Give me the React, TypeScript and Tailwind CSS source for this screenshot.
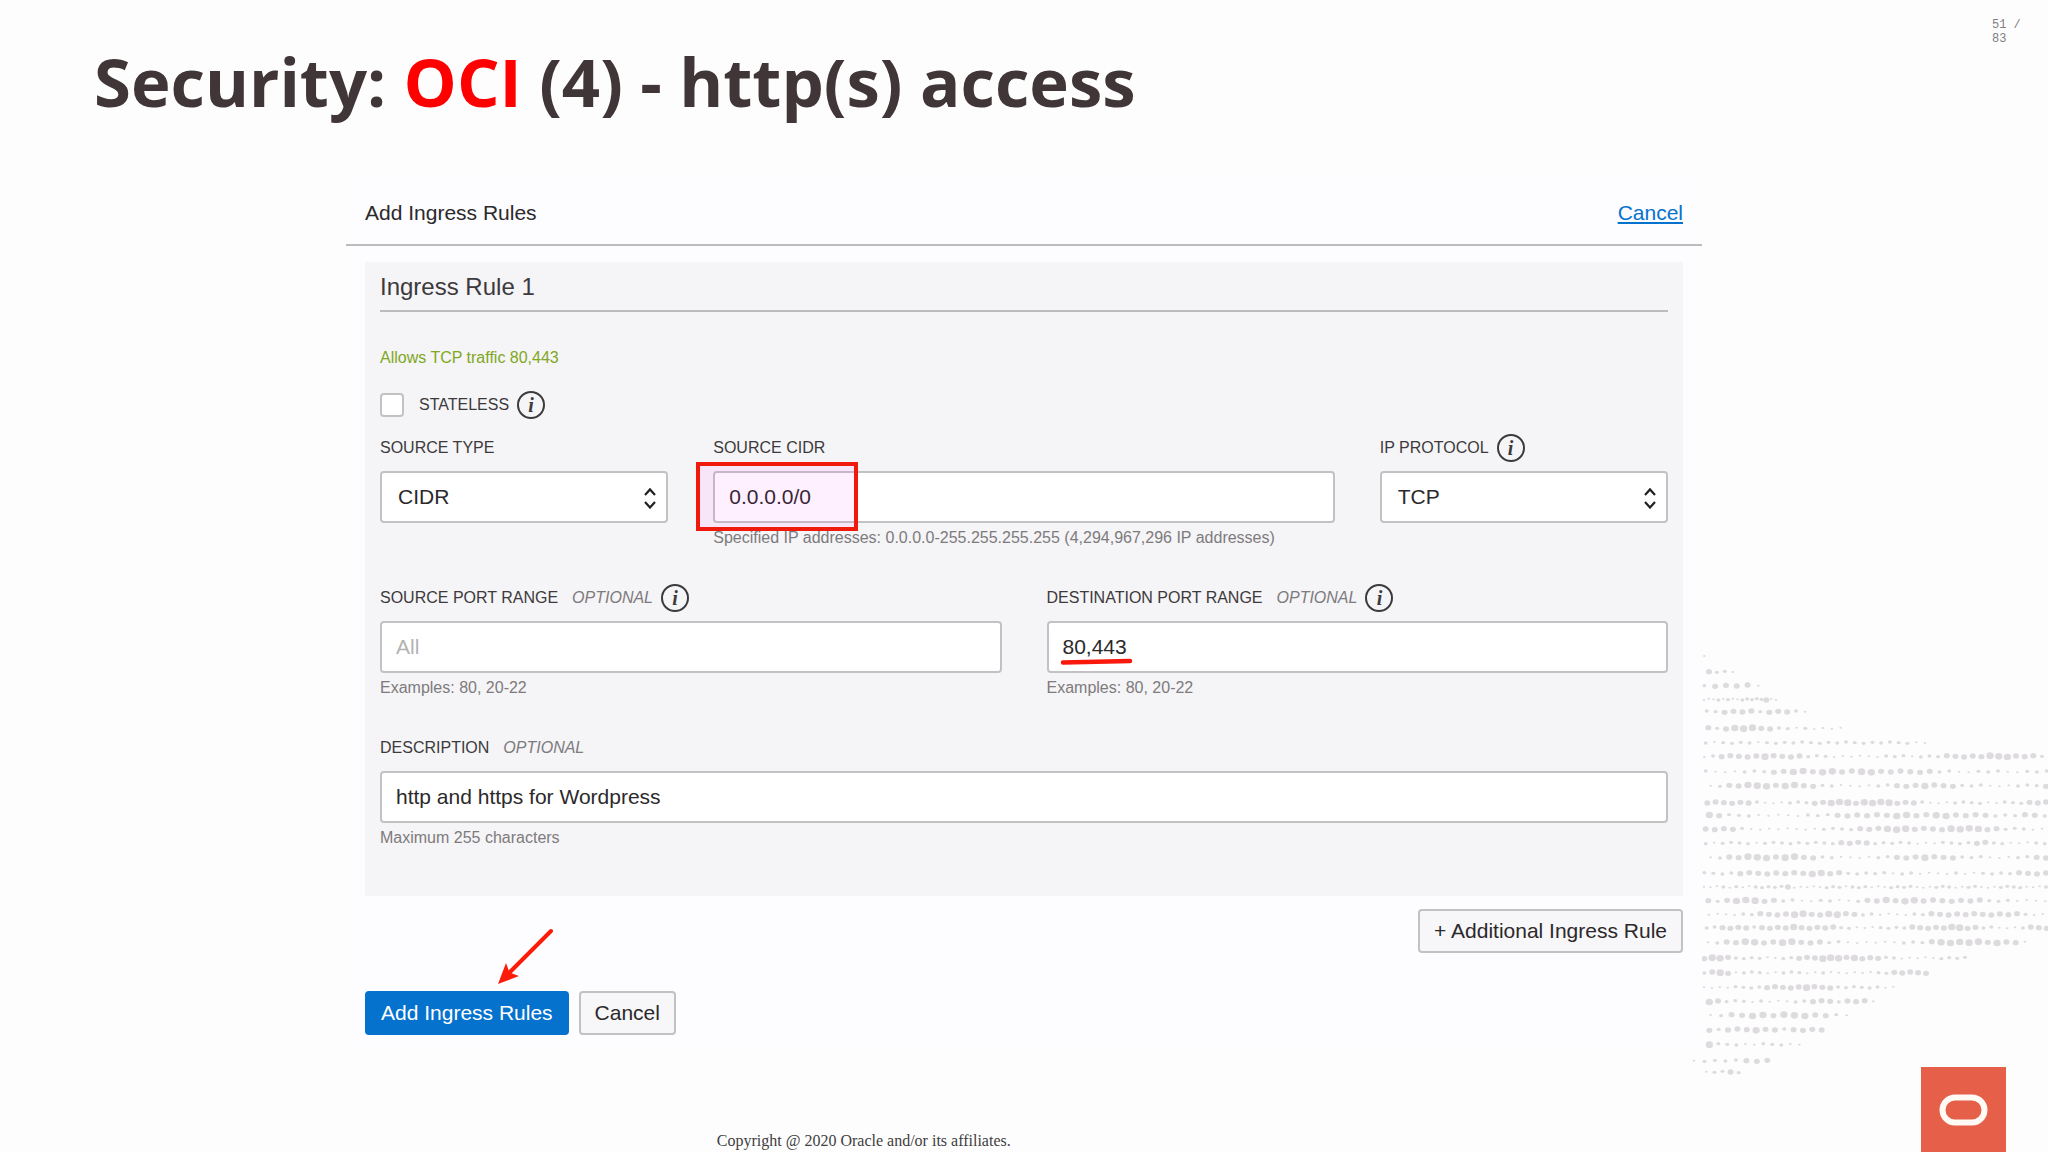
import React from "react";

type DotRow = { y: number; from: number; to: number; sizes: string };

/* Each digit is one dot, from 1 (small) to 4 (large), spread evenly over the row. */
const dotRows: DotRow[] = [
  { y: 50, from: 73, to: 73, sizes: "1" },
  { y: 96, from: 87, to: 158, sizes: "3221" },
  { y: 137, from: 73, to: 235, sizes: "233331" },
  { y: 178, from: 72, to: 288, sizes: "1112121122222311" },
  { y: 215, from: 80, to: 375, sizes: "223333233321" },
  { y: 265, from: 85, to: 482, sizes: "3234443322121111" },
  { y: 308, from: 77, to: 735, sizes: "21222212222222222222222211" },
  { y: 349, from: 73, to: 1086, sizes: "1233333433332221111112221222333334443332" },
  { y: 395, from: 77, to: 1100, sizes: "211122233443443344333333221122211222" },
  { y: 437, from: 92, to: 1098, sizes: "1233444344332211112233343332221112223" },
  { y: 488, from: 82, to: 1098, sizes: "333333211122233444344443332111222211222333" },
  { y: 526, from: 88, to: 1094, sizes: "43222111112223333334433443333222332" },
  { y: 567, from: 77, to: 1086, sizes: "33332111111112222333444333344443322211" },
  { y: 609, from: 77, to: 1094, sizes: "21222212222222223333222221112222332211122" },
  { y: 652, from: 92, to: 1098, sizes: "1233444344332211112233343332221112233" },
  { y: 700, from: 73, to: 1098, sizes: "222233333333443322222122111121122223333" },
  { y: 741, from: 72, to: 1098, sizes: "111212112222231111122212221112222111222112211122221112" },
  { y: 782, from: 85, to: 1096, sizes: "3234443322112211233434433333332221111" },
  { y: 823, from: 87, to: 1088, sizes: "1111223333443344332211112233333333333211" },
  { y: 863, from: 80, to: 1100, sizes: "22333323333433333221112222333334433221112333" },
  { y: 907, from: 84, to: 1035, sizes: "12334433443332211111122234444434331" },
  { y: 954, from: 73, to: 855, sizes: "3443222211223334443433322111112222" },
  { y: 998, from: 73, to: 738, sizes: "23431222112221121111112233333" },
  { y: 1042, from: 72, to: 640, sizes: "1111222233333433322222211" },
  { y: 1084, from: 88, to: 580, sizes: "43222121112233323331" },
  { y: 1126, from: 92, to: 500, sizes: "12334434443321" },
  { y: 1169, from: 88, to: 425, sizes: "3233343323333" },
  { y: 1213, from: 88, to: 358, sizes: "42221122211" },
  { y: 1262, from: 42, to: 262, sizes: "12222333" },
  { y: 1296, from: 79, to: 176, sizes: "12232" },
];

const radii = [0, 3, 5, 8, 10];

function DotPattern() {
  return (
    <svg
      aria-hidden="true"
      viewBox="0 0 1104 1536"
      className="pointer-events-none absolute right-0 bottom-0 h-[512px] w-[368px]"
    >
      {dotRows.map((row) =>
        row.sizes.split("").map((size, i) => {
          const step = row.sizes.length > 1 ? (row.to - row.from) / (row.sizes.length - 1) : 0;
          const r = radii[Number(size)];
          return (
            <ellipse
              key={`${row.y}-${i}`}
              cx={row.from + i * step}
              cy={row.y + ((i * 7 + row.y) % 5) - 2}
              rx={r + 1}
              ry={r}
              fill="#dddbde"
            />
          );
        }),
      )}
    </svg>
  );
}

function Info({ label }: { label: string }) {
  return (
    <button
      type="button"
      aria-label={label}
      className="flex size-7 shrink-0 items-center justify-center rounded-full border-2 border-[#3c3a3c] font-['Liberation_Serif',serif] text-[20px] leading-5 font-bold text-[#3c3a3c] italic"
    >
      i
    </button>
  );
}

function FieldLabel({
  htmlFor,
  text,
  optional,
  info,
}: {
  htmlFor: string;
  text: string;
  optional?: boolean;
  info?: boolean;
}) {
  return (
    <div className="mb-[9px] flex h-7 items-center gap-2">
      <label htmlFor={htmlFor} className="text-[16px] leading-5 whitespace-nowrap text-[#3c3a3c]">
        {text}
        {optional && <span className="ml-[14px] text-[#7d7b7d] italic">OPTIONAL</span>}
      </label>
      {info && <Info label={`About ${text.toLowerCase()}`} />}
    </div>
  );
}

function Hint({ children }: { children?: React.ReactNode }) {
  return <p className="mt-[5px] text-[16px] leading-5 whitespace-nowrap text-[#7d7b7d]">{children}</p>;
}

const control =
  "block h-[52px] w-full rounded border-2 border-[#c2c1c3] bg-white text-[21px] text-[#2b292b] outline-none placeholder:text-[#b3b2b4]";

const secondaryButton =
  "h-11 rounded border-2 border-[#c2c1c3] bg-[#f7f6f8] px-[14px] text-[21px] text-[#2b292b]";

function Select({ id, value }: { id: string; value: string }) {
  return (
    <div className="relative">
      <select id={id} defaultValue={value} className={`${control} appearance-none px-4`}>
        <option>{value}</option>
      </select>
      <svg
        aria-hidden="true"
        viewBox="0 0 12 22"
        className="pointer-events-none absolute top-4 right-3 h-[22px] w-3"
        fill="none"
        stroke="#222022"
        strokeWidth="2.2"
      >
        <path d="M1 8 L6 2.5 L11 8 M1 15 L6 20.500 L11 15" />
      </svg>
    </div>
  );
}

export default function App() {
  return (
    <div className="relative flex min-h-screen flex-col overflow-hidden bg-[#fefdfe] font-['Liberation_Sans',Arial,sans-serif]">
      <DotPattern />

      <header className="flex items-start justify-between pr-5 pl-[94px]">
        <h1 className="mt-[41px] font-['Open_Sans',sans-serif] text-[67px] leading-20 font-bold text-[#403638]">
          Security: <span className="text-[#ff0000]">OCI</span> (4) - http(s) access
        </h1>
        <p className="mt-[18px] w-9 font-['Liberation_Mono',monospace] text-[12px] leading-[14px] text-[#7e7c7e]">
          51 / 83
        </p>
      </header>

      <main className="relative mx-auto mt-[58px] w-full max-w-[1356px] bg-[#fdfcfe] pb-[13px]">
        <div className="flex h-[67px] items-center justify-between border-b-2 border-[#bcbbbd] px-[19px] pt-[2px] text-[21px]">
          <h2 className="text-[#2b292b]">Add Ingress Rules</h2>
          <a href="#cancel" className="text-[#0572ce] underline">
            Cancel
          </a>
        </div>

        <form className="px-[19px]" onSubmit={(e) => e.preventDefault()}>
          <section className="mt-4 bg-[#f5f4f6] px-[15px] pb-12">
            <h3 className="flex h-[50px] items-center border-b-2 border-[#bcbbbd] pt-[2px] text-[24px] text-[#3c3a3c]">
              Ingress Rule 1
            </h3>
            <p className="mt-9 text-[16px] leading-5 text-[#7fa823]">Allows TCP traffic 80,443</p>

            <div className="mt-[23px] flex h-7 items-center">
              <input
                id="stateless"
                type="checkbox"
                className="size-6 appearance-none rounded border-2 border-[#c2c1c3] bg-white"
              />
              <label htmlFor="stateless" className="mr-2 ml-[15px] text-[16px] leading-5 text-[#3c3a3c]">
                STATELESS
              </label>
              <Info label="About stateless" />
            </div>

            <div className="mt-[15px] grid grid-cols-4 gap-x-[45px] gap-y-9">
              <div>
                <FieldLabel htmlFor="source-type" text="SOURCE TYPE" />
                <Select id="source-type" value="CIDR" />
              </div>
              <div className="col-span-2">
                <FieldLabel htmlFor="source-cidr" text="SOURCE CIDR" />
                <div className="relative">
                  <input id="source-cidr" defaultValue="0.0.0.0/0" className={`${control} px-[14px]`} />
                  <div className="pointer-events-none absolute -top-[9px] -left-[17px] h-[69px] w-[162px] border-4 border-[#f01a0c] bg-[#ff00ff]/6" />
                </div>
                <Hint>Specified IP addresses: 0.0.0.0-255.255.255.255 (4,294,967,296 IP addresses)</Hint>
              </div>
              <div>
                <FieldLabel htmlFor="protocol" text="IP PROTOCOL" info />
                <Select id="protocol" value="TCP" />
              </div>

              <div className="col-span-2">
                <FieldLabel htmlFor="source-port" text="SOURCE PORT RANGE" optional info />
                <input id="source-port" placeholder="All" className={`${control} px-[14px]`} />
                <Hint>Examples: 80, 20-22</Hint>
              </div>
              <div className="col-span-2">
                <FieldLabel htmlFor="destination-port" text="DESTINATION PORT RANGE" optional info />
                <div className="relative">
                  <input id="destination-port" defaultValue="80,443" className={`${control} px-[14px]`} />
                  <svg
                    aria-hidden="true"
                    viewBox="0 0 76 10"
                    className="pointer-events-none absolute top-9 left-3 h-[10px] w-[76px]"
                  >
                    <path
                      d="M4 5.500 L71 4"
                      fill="none"
                      stroke="#f8180c"
                      strokeWidth="4.500"
                      strokeLinecap="round"
                    />
                  </svg>
                </div>
                <Hint>Examples: 80, 20-22</Hint>
              </div>

              <div className="col-span-4">
                <FieldLabel htmlFor="description" text="DESCRIPTION" optional />
                <input
                  id="description"
                  defaultValue="http and https for Wordpress"
                  className={`${control} px-[14px]`}
                />
                <Hint>Maximum 255 characters</Hint>
              </div>
            </div>
          </section>

          <div className="mt-[13px] flex justify-end">
            <button type="button" className={secondaryButton}>
              + Additional Ingress Rule
            </button>
          </div>

          <div className="relative mt-[38px] flex gap-[10px]">
            <button type="submit" className="h-11 rounded bg-[#0572ce] px-4 text-[21px] text-white">
              Add Ingress Rules
            </button>
            <button type="button" className={secondaryButton}>
              Cancel
            </button>
            <svg
              aria-hidden="true"
              viewBox="0 0 60 60"
              className="pointer-events-none absolute -top-[64px] left-[131px] size-[60px]"
            >
              <path d="M55 4 L14 45" stroke="#fc1c08" strokeWidth="4" strokeLinecap="round" />
              <path d="M2 57 L10 36 L13.500 45.500 L23 49 Z" fill="#fc1c08" />
            </svg>
          </div>
        </form>
      </main>

      <footer className="relative mt-auto flex items-end justify-between pr-[42px] pl-[35%]">
        <p className="pb-px font-['Liberation_Serif',serif] text-[16px] leading-5 text-[#403e40]">
          Copyright @ 2020 Oracle and/or its affiliates.
        </p>
        <svg role="img" aria-label="Oracle" viewBox="0 0 85 85" className="size-[85px]">
          <rect width="85" height="85" fill="#e55f49" />
          <rect x="21.500" y="30.500" width="42" height="25" rx="12.500" fill="none" stroke="#fffaf5" strokeWidth="6" />
        </svg>
      </footer>
    </div>
  );
}
